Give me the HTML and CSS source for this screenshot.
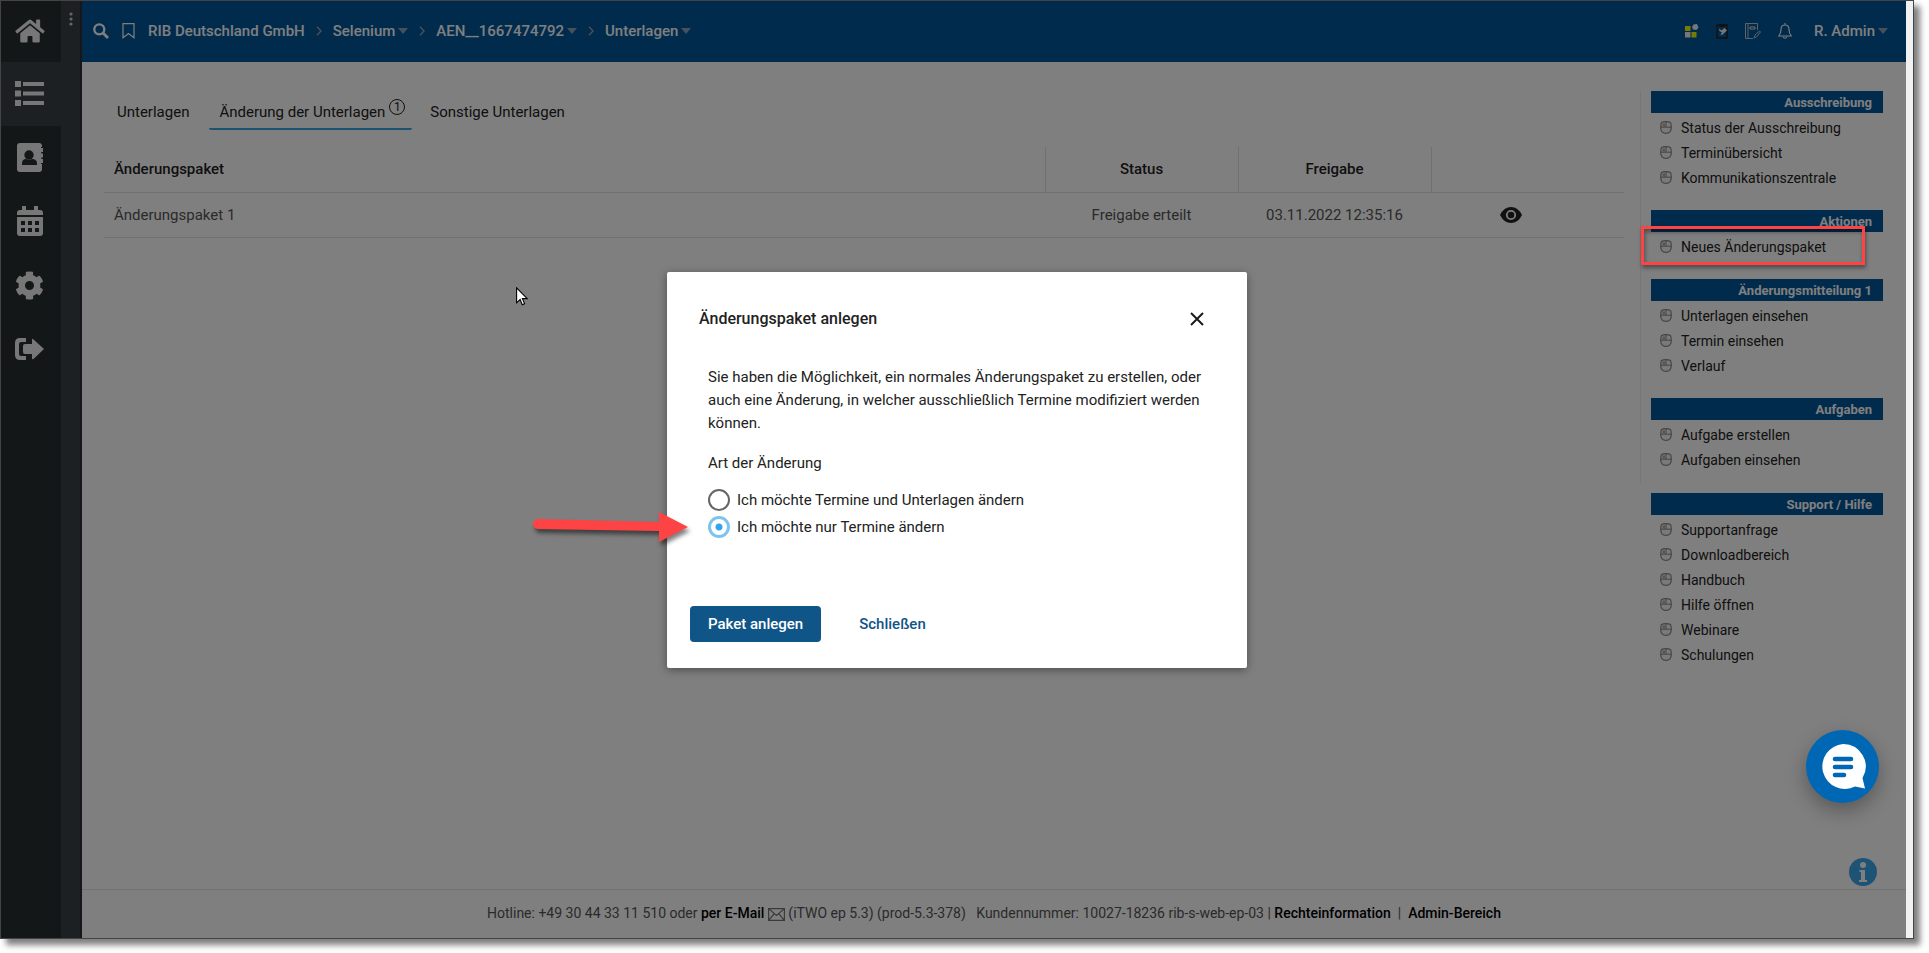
FILE: index.html
```html
<!DOCTYPE html>
<html lang="de">
<head>
<meta charset="utf-8">
<title>Änderung der Unterlagen</title>
<link rel="stylesheet" href="styles.css">
</head>
<body>
<svg class="defs" aria-hidden="true">
  <symbol id="mouse" viewBox="0 0 12 13"><path d="M1.5 1.500Q3 .7 6 .7t4.500.8Q11.300 3 11.300 6.500 11.300 12.300 6 12.300T.7 6.500Q.7 3 1.500 1.500Z" fill="#f4f4f4" stroke="#888" stroke-width="1.200"/><path d="M2.500 2.500h2.500v3H2.500z" fill="#d9a071"/><path d="M1 6.200h10M6 1v5" stroke="#888" fill="none"/></symbol>
  <symbol id="caret" viewBox="0 0 10 6"><path d="M0 0h10L5 6z" fill="currentColor"/></symbol>
  <symbol id="chev" viewBox="0 0 6 10"><path d="M1 .7 5 5 1 9.300" fill="none" stroke="currentColor" stroke-width="1.400"/></symbol>
</svg>
<div class="frame">
  <nav class="rail" aria-label="Hauptnavigation">
    <a class="rail-item rail-home" href="#" aria-label="Start"><svg width="30" height="26" viewBox="0 0 576 512"><path fill="currentColor" d="M281 148 96 300v164a16 16 0 0 0 16 16h112a16 16 0 0 0 16-16v-96a16 16 0 0 1 16-16h64a16 16 0 0 1 16 16v96a16 16 0 0 0 16 16h112a16 16 0 0 0 16-16V300L295 148a12 12 0 0 0-14 0zM572 251l-84-69V43a12 12 0 0 0-12-12h-56a12 12 0 0 0-12 12v73l-90-74a48 48 0 0 0-61 0L4 251a12 12 0 0 0-2 17l26 31a12 12 0 0 0 17 2L281 107a12 12 0 0 1 15 0l236 194a12 12 0 0 0 17-2l25-31a12 12 0 0 0-2-17z"/></svg></a>
    <a class="rail-item rail-active" href="#" aria-label="Liste"><svg width="29" height="25" viewBox="0 0 29 25" fill="currentColor"><path d="M0 0h6v6H0zM0 9.500h6v6H0zM0 19h6v6H0zM8 1h21v4H8zM8 10.500h21v4H8zM8 20h21v4H8z"/></svg></a>
    <a class="rail-item" href="#" aria-label="Adressbuch"><svg width="26" height="29" viewBox="0 0 26 29"><rect width="25" height="29" rx="3" fill="currentColor"/><path d="M24 5h2v4h-2zM24 10.500h2v4h-2zM24 16h2v4h-2z" fill="currentColor"/><path d="M24 4.500h2M24 9.700h2M24 15.200h2M24 20.500h2" stroke="#262f2f"/><circle cx="12" cy="12" r="4.700" fill="#262f2f"/><path d="M5 22v-1.500q0-4.500 4-4.500 3 1.500 6 0 5 0 5 4.500V22z" fill="#262f2f"/></svg></a>
    <a class="rail-item" href="#" aria-label="Kalender"><svg width="26" height="30" viewBox="0 0 26 30"><path fill="currentColor" d="M5 0h4v4h8V0h4v4h2q3 0 3 3v2H0V7q0-3 3-3h2zM0 11h26v16q0 3-3 3H3q-3 0-3-3z"/><path fill="#262f2f" d="M4 15h4v4H4zM11 15h4v4h-4zM18 15h4v4h-4zM4 22h4v4H4zM11 22h4v4h-4zM18 22h4v4h-4z"/></svg></a>
    <a class="rail-item" href="#" aria-label="Einstellungen"><svg width="29" height="29" viewBox="0 0 512 512"><path fill="currentColor" d="M487 316l-43-25a192 192 0 0 0 0-70l43-25a12 12 0 0 0 6-14 249 249 0 0 0-55-95 12 12 0 0 0-15-2l-43 25a191 191 0 0 0-61-35V25a12 12 0 0 0-9-11 251 251 0 0 0-110 0 12 12 0 0 0-9 11v50a201 201 0 0 0-61 35L88 85a12 12 0 0 0-15 2 247 247 0 0 0-55 95 12 12 0 0 0 6 14l42 25a192 192 0 0 0 0 70l-42 25a12 12 0 0 0-6 14 249 249 0 0 0 55 95 12 12 0 0 0 15 2l43-25a191 191 0 0 0 60 35v50a12 12 0 0 0 10 11 251 251 0 0 0 109 0 12 12 0 0 0 10-11v-50a201 201 0 0 0 60-35l43 25a12 12 0 0 0 15-2 247 247 0 0 0 55-95 12 12 0 0 0-6-14zM256 336a80 80 0 1 1 0-160 80 80 0 0 1 0 160z"/></svg></a>
    <a class="rail-item" href="#" aria-label="Abmelden"><svg width="29" height="22" viewBox="0 0 29 22"><path fill="currentColor" d="M18 1Q17 0 17 2v4H10q-2 0-2 2v6q0 2 2 2h7v4q0 2 1.500 1L29 11zM11 0v4H6Q4 4 4 6v10q0 2 2 2h5v4H5q-5 0-5-5V5q0-5 5-5z"/></svg></a>
  </nav>
  <div class="grip"><svg width="4" height="14" viewBox="0 0 4 14" fill="#ccc"><circle cx="2" cy="2" r="1.600"/><circle cx="2" cy="7" r="1.600"/><circle cx="2" cy="12" r="1.600"/></svg></div>
  <div class="page">
    <header class="topbar">
      <button class="plain" aria-label="Suchen"><svg width="16" height="16" viewBox="0 0 16 16" fill="none" stroke="currentColor"><circle cx="6.300" cy="6.300" r="5" stroke-width="2.300"/><path d="M10 10l5 5" stroke-width="2.800"/></svg></button>
      <button class="plain mark" aria-label="Lesezeichen"><svg width="13" height="16" viewBox="0 0 13 16"><path d="M1 .7h11v14L6.500 10.500 1 14.700z" fill="none" stroke="currentColor" stroke-width="1.200"/></svg></button>
      <nav class="crumbs" aria-label="Pfad">
        <a href="#">RIB Deutschland GmbH</a>
        <svg class="chev"><use href="#chev"/></svg>
        <a href="#">Selenium<svg class="caret"><use href="#caret"/></svg></a>
        <svg class="chev"><use href="#chev"/></svg>
        <a href="#">AEN__1667474792<svg class="caret"><use href="#caret"/></svg></a>
        <svg class="chev"><use href="#chev"/></svg>
        <a href="#">Unterlagen<svg class="caret"><use href="#caret"/></svg></a>
      </nav>
      <div class="tools">
        <button class="plain" aria-label="Apps"><svg width="14" height="14" viewBox="0 0 14 14"><path fill="#f5f500" d="M0 2h5.500v5H0zM6.500 8h5v5.500h-5z"/><path fill="#eee" d="M0 8h5.500v5.500H0zM8.500.5 12 0l1.500 3.500L11.500 6 8 5.500 7 3z"/></svg></button>
        <button class="plain" aria-label="Aufgaben"><svg width="12" height="16" viewBox="0 0 12 16"><path d="M1 2h10v13H1z" fill="none" stroke="#222" stroke-width="1.400"/><path d="M3 1h6v3H3z" fill="#222"/><path d="M3 5.500l2.500 2L8.500 5l2.500 2.500-5 4.500-1.500-.5L6 9.500 3.500 8z" fill="#eee"/></svg></button>
        <button class="plain" aria-label="Notizen"><svg width="16" height="16" viewBox="0 0 16 16" fill="none" stroke="#b8c4d0"><path d="M12.500 7V.5H.5v15H8M3 .5v15"/><path d="M5 4h5v2H5z" stroke="#e8e8e8" fill="#222"/><path d="M9 15l1-3 4.500-4 1 1-4 5z"/></svg></button>
        <button class="plain" aria-label="Benachrichtigungen"><svg width="14" height="16" viewBox="0 0 14 16" fill="none" stroke="currentColor" stroke-width="1.100"><path d="M.7 13Q3 10.500 3 6.500q0-4.500 4-4.500t4 4.500q0 4 2.300 6.500zM7 2V0M5 14q2 2.500 4 0"/></svg></button>
        <a class="user" href="#">R. Admin<svg class="caret"><use href="#caret"/></svg></a>
      </div>
    </header>
    <div class="body">
      <main class="main">
        <nav class="tabs">
          <a class="tab" href="#">Unterlagen</a>
          <a class="tab tab-on" href="#">Änderung der Unterlagen<span class="count">1</span></a>
          <a class="tab" href="#">Sonstige Unterlagen</a>
        </nav>
        <table class="grid">
          <colgroup><col><col class="c"><col class="c"><col class="c"></colgroup>
          <thead><tr><th>Änderungspaket</th><th>Status</th><th>Freigabe</th><th></th></tr></thead>
          <tbody><tr><td>Änderungspaket 1</td><td>Freigabe erteilt</td><td>03.11.2022 12:35:16</td><td class="act"><button class="plain eye" aria-label="Ansehen"><svg width="22" height="16" viewBox="0 0 22 16"><path d="M0 8Q4 0 11 0t11 8q-4 8-11 8T0 8z" fill="#222"/><circle cx="11" cy="8" r="4.200" fill="#222" stroke="#fff" stroke-width="1.800"/></svg></button></td></tr></tbody>
        </table>
      </main>
      <aside class="side">
        <div class="lined">
          <section><h2>Ausschreibung</h2><ul>
            <li><svg><use href="#mouse"/></svg><a href="#">Status der Ausschreibung</a></li>
            <li><svg><use href="#mouse"/></svg><a href="#">Terminübersicht</a></li>
            <li><svg><use href="#mouse"/></svg><a href="#">Kommunikationszentrale</a></li></ul></section>
          <section><h2>Aktionen</h2><ul>
            <li class="marked"><svg><use href="#mouse"/></svg><a href="#">Neues Änderungspaket</a></li></ul></section>
          <section><h2>Änderungsmitteilung 1</h2><ul>
            <li><svg><use href="#mouse"/></svg><a href="#">Unterlagen einsehen</a></li>
            <li><svg><use href="#mouse"/></svg><a href="#">Termin einsehen</a></li>
            <li><svg><use href="#mouse"/></svg><a href="#">Verlauf</a></li></ul></section>
          <section><h2>Aufgaben</h2><ul>
            <li><svg><use href="#mouse"/></svg><a href="#">Aufgabe erstellen</a></li>
            <li><svg><use href="#mouse"/></svg><a href="#">Aufgaben einsehen</a></li></ul></section>
        </div>
        <section class="support"><h2>Support / Hilfe</h2><ul>
          <li><svg><use href="#mouse"/></svg><a href="#">Supportanfrage</a></li>
          <li><svg><use href="#mouse"/></svg><a href="#">Downloadbereich</a></li>
          <li><svg><use href="#mouse"/></svg><a href="#">Handbuch</a></li>
          <li><svg><use href="#mouse"/></svg><a href="#">Hilfe öffnen</a></li>
          <li><svg><use href="#mouse"/></svg><a href="#">Webinare</a></li>
          <li><svg><use href="#mouse"/></svg><a href="#">Schulungen</a></li></ul></section>
      </aside>
    </div>
    <footer class="foot">Hotline: +49 30 44 33 11 510 oder <a href="#">per E-Mail</a> <svg class="mail" viewBox="0 0 17 13" fill="none" stroke="#777" stroke-width="1.200"><path d="M.6.600h15.800v11.800H.6zM.6.600 8.500 7.500 16.400.6M.6 12.400 6 6M16.400 12.400 11 6"/></svg> (iTWO ep 5.3) (prod-5.3-378) &nbsp; Kundennummer: 10027-18236 rib-s-web-ep-03 | <a href="#">Rechteinformation</a> &nbsp;|&nbsp; <a href="#">Admin-Bereich</a></footer>
  </div>
  <div class="scroll"></div>
  <button class="plain info" aria-label="Information"><svg width="28" height="28" viewBox="0 0 28 28"><circle cx="14" cy="14" r="14" fill="#3aa6e8"/><circle cx="14" cy="7" r="3" fill="#fff"/><path d="M10.500 12H16v10h2v2h-8v-2h2v-8h-1.500z" fill="#fff"/></svg></button>
  <div class="backdrop">
    <form class="dialog" role="dialog" aria-labelledby="dlg-title">
      <div class="dlg-head"><h1 id="dlg-title">Änderungspaket anlegen</h1><button type="button" class="plain close" aria-label="Schließen"><svg width="14" height="14" viewBox="0 0 14 14"><path d="M1 1l12 12M13 1 1 13" stroke="#1c1c1c" stroke-width="2"/></svg></button></div>
      <div class="dlg-body">
        <p>Sie haben die Möglichkeit, ein normales Änderungspaket zu erstellen, oder auch eine Änderung, in welcher ausschließlich Termine modifiziert werden können.</p>
        <fieldset>
          <legend>Art der Änderung</legend>
          <div class="opt"><input type="radio" name="art" id="r1"><label for="r1">Ich möchte Termine und Unterlagen ändern</label></div>
          <div class="opt"><input type="radio" name="art" id="r2" checked><label for="r2">Ich möchte nur Termine ändern</label></div>
        </fieldset>
      </div>
      <div class="dlg-foot"><button type="button" class="btn primary">Paket anlegen</button><button type="button" class="btn link">Schließen</button></div>
      <svg class="arrow" width="176" height="46" viewBox="0 0 176 46"><path d="M14 12 135 15V5l29 15-29 15V24L14 22a5 5 0 0 1 0-10z" fill="#fe4344"/></svg>
    </form>
  </div>
  <button class="chat" aria-label="Chat"><svg width="46" height="46" viewBox="0 0 46 46"><path fill="#fff" d="M23 0a22.500 22.500 0 0 1 19.500 34L45 44.500l-10-2A22.500 22.500 0 1 1 23 0z"/><path d="M15 15h16M15 23h16M15 31h9" stroke="#0067b5" stroke-width="4.600" stroke-linecap="round"/></svg></button>
  <svg class="pointer" width="12" height="19" viewBox="0 0 12 19"><path d="M.6.800v15l3.500-3.300 2.200 5.300 2.300-1-2.200-5.200h4.800z" fill="#fff" stroke="#000" stroke-width="1.100"/></svg>
</div>
</body>
</html>
```
FILE: styles.css
```css
* { box-sizing: border-box; }
body {
  margin: 0;
  height: 100vh;
  padding: 0 15px 14px 0;
  display: flex;
  background: #fff;
  color: #222;
  font: 15px/20px Roboto, "Liberation Sans", sans-serif;
}
a { color: inherit; text-decoration: none; }
ul { list-style: none; margin: 0; padding: 0; }
svg { flex: none; }
.defs { position: absolute; width: 0; height: 0; }
.plain { display: flex; padding: 0; border: 0; background: none; color: inherit; }

.frame {
  position: relative;
  flex: 1;
  display: flex;
  border: 1px solid #444;
  box-shadow: 6px 6px 6px rgba(0, 0, 0, .5);
}

.rail { width: 60px; background: #262f2e; color: #eee; }
.rail-item { display: flex; align-items: center; justify-content: center; height: 64px; padding: 0 3px 2px 0; }
.rail-home { height: 61px; }
.rail-active { background: #384044; }
.grip { width: 21px; padding: 10px 8px; background: #384044; border-right: 2px solid #2e2c3a; }

.page { flex: 1; display: flex; flex-direction: column; min-width: 0; }
.topbar {
  display: flex;
  align-items: center;
  height: 61px;
  padding: 0 18px 2px 11px;
  background: #00569b;
  color: #fff;
  font-weight: 500;
}
.mark { margin: 0 13px; }
.crumbs { display: flex; align-items: center; gap: 11px; }
.crumbs a, .user { display: flex; align-items: center; gap: 3px; }
.caret { width: 10px; height: 6px; color: #8fa3b8; }
.chev { width: 6px; height: 10px; color: #8fa3b8; }
.tools { display: flex; align-items: center; gap: 17px; margin-left: auto; }
.user { margin-left: 5px; }

.body { flex: 1; display: flex; padding: 29px 23px 0 22px; }
.main { flex: 1; }
.tabs { display: flex; gap: 2px; padding-left: 3px; }
.tab { display: flex; height: 39px; padding: 11px 10px 6px; border-bottom: 2px solid transparent; border-radius: 2px; }
.tab-on { margin: 0 6px 0 8px; padding-right: 9px; border-color: #35a4e0; }
.count { width: 16px; height: 16px; margin: -3px -2px 0 4px; border: 1px solid #222; border-radius: 50%; font-size: 12px; line-height: 14px; text-align: center; }

.grid { width: 100%; margin-top: 17px; border-collapse: collapse; table-layout: fixed; }
.grid .c { width: 193px; }
.grid th, .grid td { height: 45px; padding: 0 10px; text-align: center; border-bottom: 1px solid #e0e0e0; }
.grid th { font-weight: 500; border-left: 1px solid #e0e0e0; }
.grid th:first-child, .grid td:first-child { text-align: left; border-left: 0; }
.grid td { color: #555; }
.act .eye { margin: 0 auto; padding-right: 33px; }

.side { width: 243px; margin-left: 16px; }
.lined { border-left: 1px solid #ececec; padding-left: 10px; padding-bottom: 11px; }
.support { margin-top: 10px; padding-left: 11px; }
.lined section + section { margin-top: 20px; }
.side h2 { margin: 0; height: 22px; padding-right: 11px; background: #00569b; color: #fff; font-size: 13px; line-height: 23px; font-weight: 700; text-align: right; }
.side ul { padding-top: 2px; }
.side li { display: flex; align-items: center; gap: 9px; height: 25px; padding-left: 9px; font-size: 14px; }
.side li svg { width: 12px; height: 13px; }
.marked { position: relative; }
.marked::after {
  content: "";
  position: absolute;
  inset: -8px 18px -6px -10px;
  z-index: 20;
  border: 3px solid #fe4344;
  box-shadow: 1px 3px 4px rgba(0, 0, 0, .4), inset 1px 3px 4px rgba(0, 0, 0, .4);
}

.foot { height: 49px; border-top: 1px solid #e4e4e4; line-height: 46px; text-align: center; color: #555; font-size: 14px; }
.foot a { color: #000; font-weight: 500; }
.mail { width: 17px; height: 13px; vertical-align: -3px; }
.scroll { width: 7px; background: #f1f1f1; position: relative; z-index: 12; }

.info { position: absolute; right: 36px; bottom: 52px; }
.backdrop { position: absolute; inset: 0; z-index: 10; display: flex; align-items: center; justify-content: center; background: rgba(0, 0, 0, .5); }
.dialog { position: relative; width: 580px; padding: 31px 24px 26px 23px; background: #fff; border-radius: 2px; box-shadow: 0 2px 8px rgba(0, 0, 0, .4); }
.dlg-head { display: flex; align-items: center; justify-content: space-between; height: 32px; padding: 0 19px 0 9px; }
.dlg-head h1 { margin: 0; font-size: 16px; font-weight: 500; }
.dlg-body { padding: 31px 17px 0 18px; }
.dlg-body p { margin: 0 0 17px; line-height: 23px; }
fieldset { margin: 0; padding: 0; border: 0; }
legend { padding: 0; line-height: 23px; margin-bottom: 12px; }
.opt { display: flex; align-items: center; gap: 7px; height: 27px; }
.opt input { appearance: none; width: 22px; height: 22px; margin: 0; border: 2px solid #666; border-radius: 50%; background: #fff; }
.opt input:checked { border-color: #7cc4ee; border-width: 3px; background: radial-gradient(circle, #35a4e8 3px, #fff 4px); }
.dlg-foot { display: flex; gap: 20px; margin-top: 65px; }
.btn { height: 36px; padding: 0 18px; border: 0; border-radius: 4px; font: 500 15px/20px Roboto, sans-serif; }
.primary { background: #105588; color: #fff; }
.link { background: none; color: #105588; }
.arrow { position: absolute; left: -143px; top: 235px; filter: drop-shadow(2px 4px 2px rgba(0, 0, 0, .5)); }
.chat { position: absolute; right: 34px; bottom: 135px; z-index: 12; width: 73px; height: 73px; padding: 0; border: 0; border-radius: 50%; background: #0067b5; display: flex; align-items: center; justify-content: center; box-shadow: 0 8px 20px rgba(0, 0, 0, .3); }
.pointer { position: absolute; left: 515px; top: 286px; z-index: 12; }
```
